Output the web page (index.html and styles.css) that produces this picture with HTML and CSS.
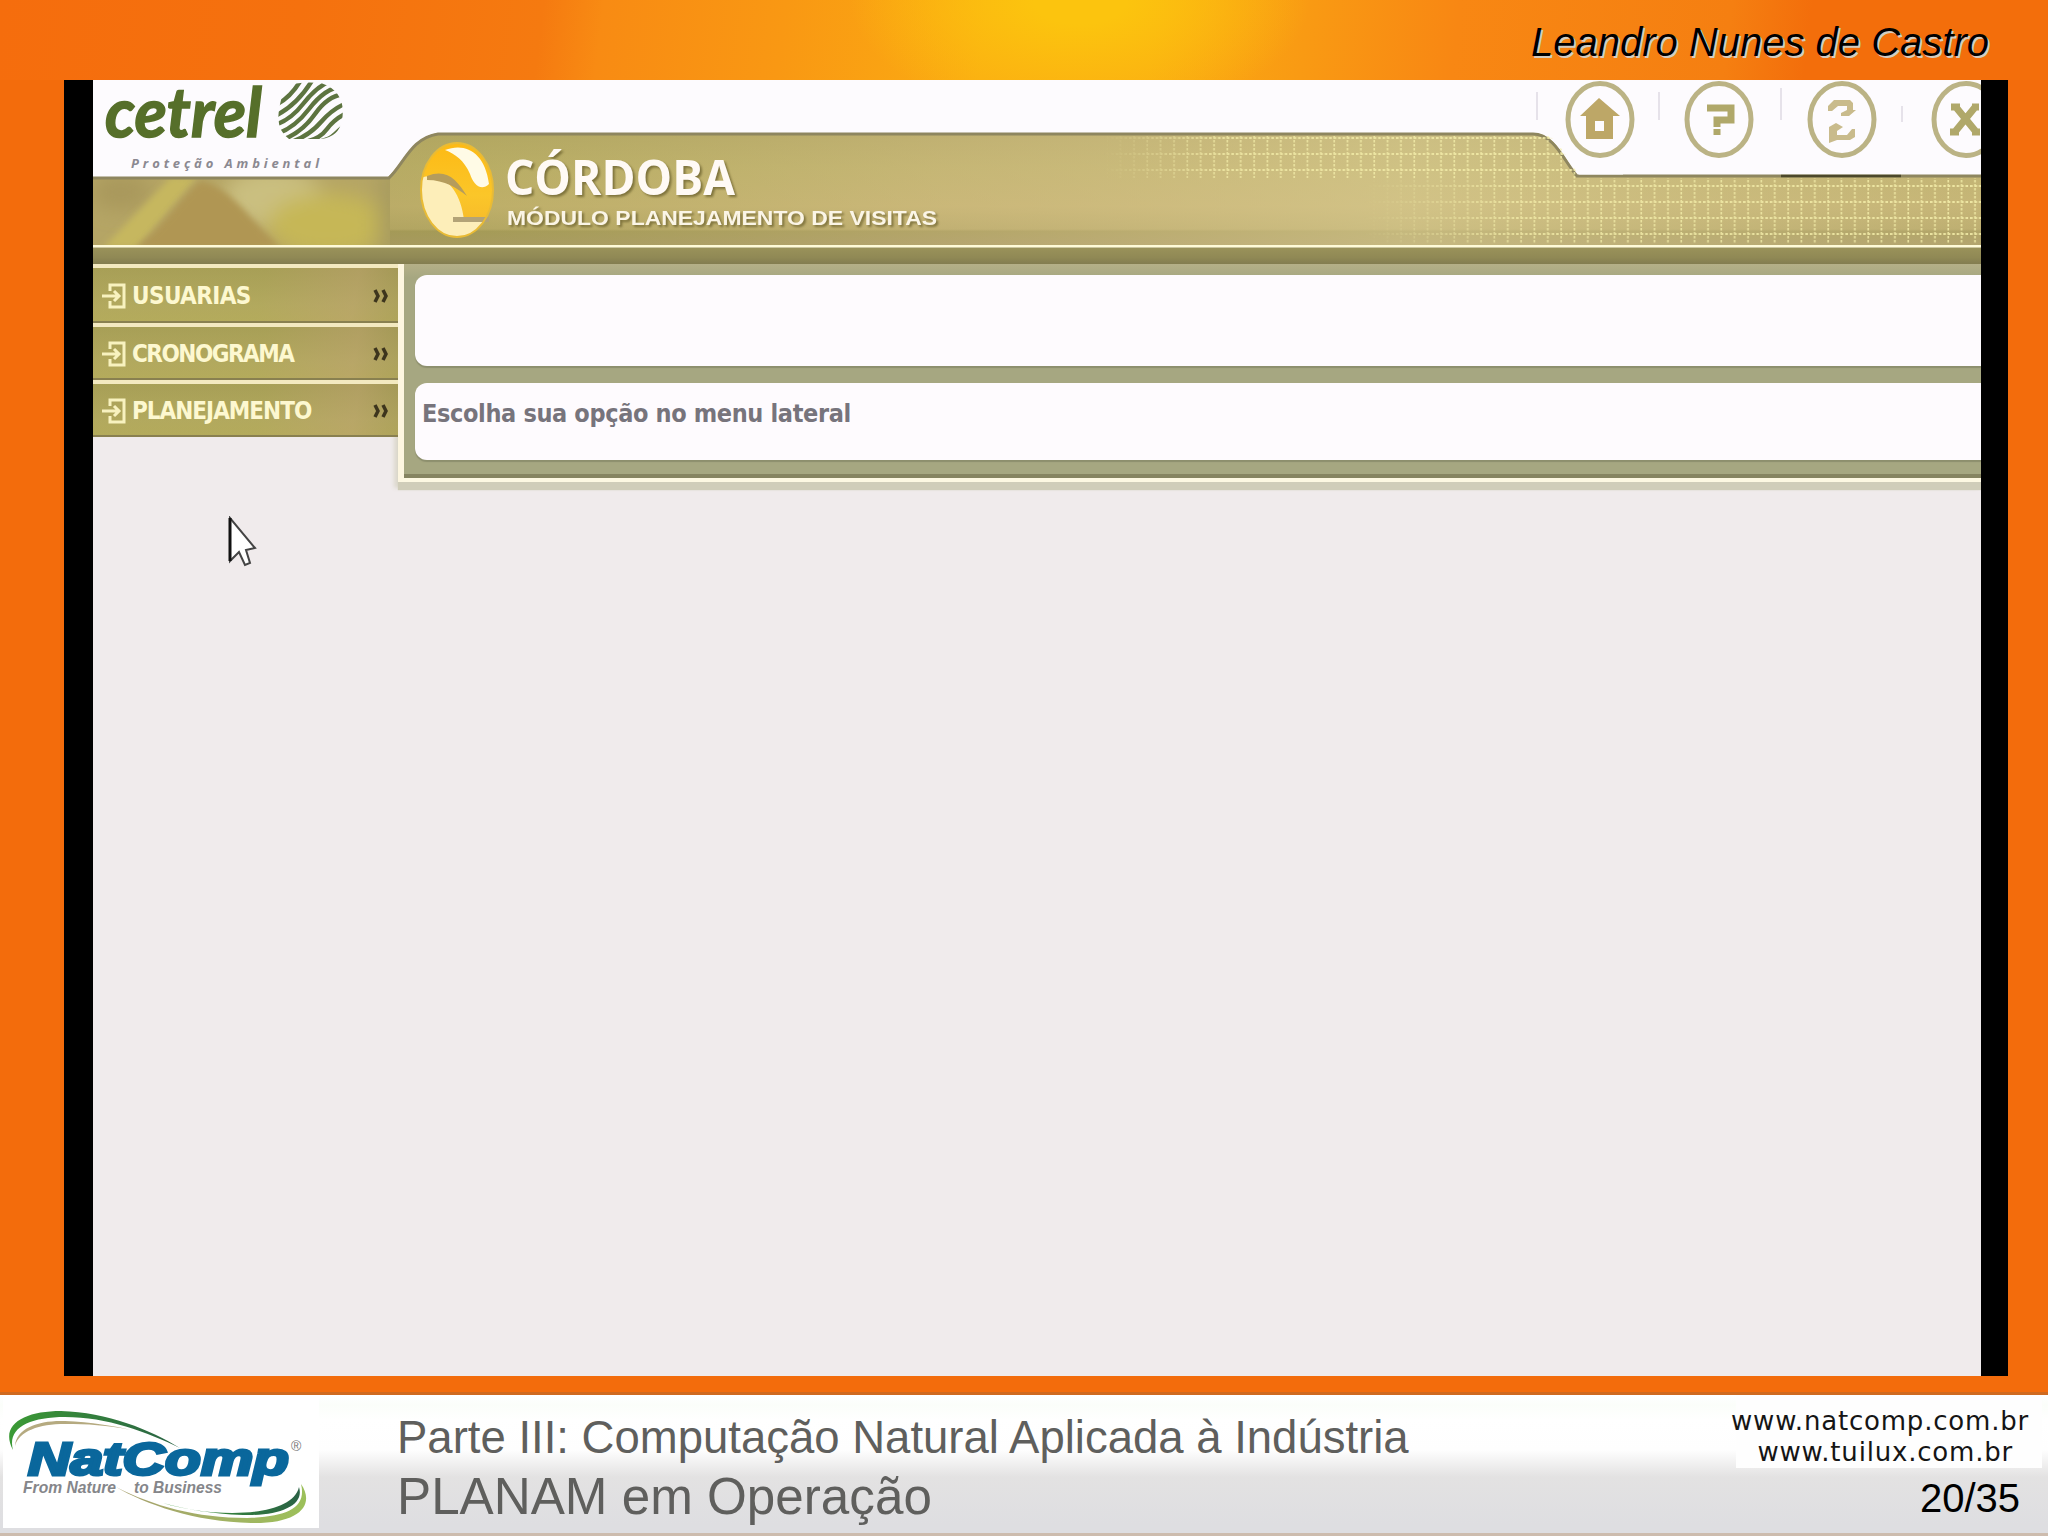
FILE: index.html
```html
<!DOCTYPE html>
<html lang="pt-br">
<head>
    <meta charset="UTF-8">
    <title>PLANAM em Operação</title>
    <link rel="stylesheet" href="styles.css">
</head>
<body>

<div class="slide">
    <div class="topbar">Leandro Nunes de Castro</div>

    <div class="stage">
        <div class="app">
            <div class="header">
                <!-- banner artwork -->
                <svg class="banner" width="1888" height="184" viewBox="0 0 1888 184">
                    <defs>
                        <linearGradient id="gold" x1="0" y1="0" x2="0" y2="1">
                            <stop offset="0" stop-color="#b3a866"/>
                            <stop offset=".3" stop-color="#bcb16b"/>
                            <stop offset=".65" stop-color="#c3b371"/>
                            <stop offset=".85" stop-color="#b5a868"/>
                            <stop offset=".87" stop-color="#a09758"/>
                            <stop offset="1" stop-color="#a39763"/>
                        </linearGradient>
                        <linearGradient id="shine" x1="0" y1="0" x2="1" y2="0">
                            <stop offset="0" stop-color="#a08a58" stop-opacity=".5"/>
                            <stop offset=".2" stop-color="#b0a455" stop-opacity=".3"/>
                            <stop offset=".45" stop-color="#d8c088" stop-opacity=".35"/>
                            <stop offset=".7" stop-color="#dacb92" stop-opacity=".65"/>
                            <stop offset="1" stop-color="#cbb980" stop-opacity=".4"/>
                        </linearGradient>
                        <linearGradient id="band" x1="0" y1="0" x2="0" y2="1">
                            <stop offset="0" stop-color="#9a925a"/>
                            <stop offset=".6" stop-color="#908955"/>
                            <stop offset="1" stop-color="#837d50"/>
                        </linearGradient>
                        <linearGradient id="fade" x1="0" y1="0" x2="1" y2="0">
                            <stop offset="0" stop-color="#fff" stop-opacity="0"/>
                            <stop offset=".25" stop-color="#fff" stop-opacity=".75"/>
                            <stop offset="1" stop-color="#fff" stop-opacity=".85"/>
                        </linearGradient>
                        <linearGradient id="orb" x1="0" y1="0" x2="0" y2="1">
                            <stop offset="0" stop-color="#fdb913"/>
                            <stop offset=".55" stop-color="#fbc629"/>
                            <stop offset="1" stop-color="#f4b52b"/>
                        </linearGradient>
                        <filter id="soft" x="-20%" y="-20%" width="140%" height="140%"><feGaussianBlur stdDeviation="10"/></filter>
                        <filter id="soft2"><feGaussianBlur stdDeviation="3"/></filter>
                        <pattern id="dots" x="8" y="0" width="13.35" height="16" patternUnits="userSpaceOnUse">
                            <path d="M5 0v16" stroke="#f4eeaa" stroke-width="1.6" stroke-dasharray="2.6 1.4"/>
                            <path d="M0 10h13.35" stroke="#f4eeaa" stroke-width="1.8" stroke-dasharray="2.6 1.85"/>
                        </pattern>
                        <mask id="m1"><rect x="1010" y="52" width="480" height="46" fill="url(#fade)"/></mask>
                        <mask id="m2"><rect x="1270" y="97" width="618" height="67" fill="url(#fade)"/></mask>
                        <clipPath id="photo"><rect x="0" y="99" width="297" height="66"/></clipPath>
                        <clipPath id="orbclip"><ellipse cx="364" cy="110" rx="36" ry="47"/></clipPath>
                        <clipPath id="leaf"><path d="M192 6Q207 1 228 3Q254 12 249 40Q246 57 228 59H196Q180 48 188 20Z"/></clipPath>
                        <path id="plate" d="M0 97H295C310 84 318 57 345 53H1440C1462 53 1472 80 1484 95H1888V166H0Z"/>
                    </defs>

                    <rect width="1888" height="184" fill="#fdfbfe"/>
                    <use href="#plate" fill="url(#gold)"/>
                    <use href="#plate" fill="url(#shine)"/>

                    <g clip-path="url(#photo)">
                        <rect y="97" width="320" height="70" fill="#b5a565"/>
                        <g filter="url(#soft)">
                            <ellipse cx="180" cy="118" rx="50" ry="30" fill="#cabf80"/>
                            <ellipse cx="235" cy="145" rx="60" ry="32" fill="#c6b757"/>
                            <ellipse cx="28" cy="112" rx="30" ry="18" fill="#a9985c"/>
                            <rect x="285" y="90" width="40" height="90" fill="#a99c5e"/>
                        </g>
                        <path d="M10 168L78 97H104L44 168Z" fill="#c6b75f" filter="url(#soft2)"/>
                        <path d="M42 168C70 148 88 116 108 101C138 108 152 134 188 168Z" fill="#b09653" filter="url(#soft2)"/>
                    </g>

                    <path d="M0 98H296C311 84 318 58 345 54H1440C1461 54 1471 81 1484 96H1888" fill="none" stroke="#8e865f" stroke-width="3"/>
                    <path d="M1688 96h120" stroke="#4c482b" stroke-width="2.5"/>

                    <rect x="1010" y="56" width="480" height="42" fill="url(#dots)" mask="url(#m1)"/>
                    <path d="M1448 52C1467 58 1475 82 1486 94.500H1530V52Z" fill="#fdfbfe"/>
                    <rect x="1270" y="98" width="618" height="66" fill="url(#dots)" mask="url(#m2)"/>
                    <path d="M1444 12v28M1566 12v28M1688 8v32M1809 26v16" stroke="#e6e2ea" stroke-width="2"/>

                    <rect y="165" width="1888" height="2.6" fill="#fffbd8"/>
                    <rect y="167.5" width="1888" height="16.5" fill="url(#band)"/>

                    <!-- cetrel logo -->
                    <text class="cetrel" x="12" y="57" textLength="157" lengthAdjust="spacingAndGlyphs">cetrel</text>
                    <text class="cetrel-sub" x="38" y="88" textLength="188">Proteção Ambiental</text>
                    <g clip-path="url(#leaf)" fill="none" stroke="#5d7440" stroke-width="4.4">
                        <path d="M180 26Q196 20 208 0"/>
                        <path d="M180 37Q204 26 220 -1"/>
                        <path d="M178 46Q196 42 210 24T238 1"/>
                        <path d="M180 55Q200 50 216 29T250 6"/>
                        <path d="M186 61Q208 54 222 34T254 14"/>
                        <path d="M198 62Q216 56 228 42T256 22"/>
                        <path d="M210 62Q226 60 234 49T256 32"/>
                        <path d="M224 62Q236 60 242 54T256 42"/>
                    </g>

                    <!-- yellow sphere -->
                    <g clip-path="url(#orbclip)">
                        <rect x="325" y="60" width="80" height="100" fill="url(#orb)"/>
                        <path d="M327 98C352 90 368 112 371 140L400 139C392 152 380 160 364 160C338 158 326 130 327 98Z" fill="#fdeeb9"/>
                        <path d="M352 70C372 62 392 72 396 104C388 112 380 104 377 94C371 80 362 74 352 70Z" fill="#fffbe6"/>
                        <path d="M334 96C354 88 364 100 374 116C364 108 352 100 334 100Z" fill="#b59c5c"/>
                    </g>
                    <path d="M360 139.500H396" stroke="#b3a377" stroke-width="5"/>
                    <ellipse cx="364" cy="110" rx="36" ry="47" fill="none" stroke="#e9bb35" stroke-width="2"/>

                    <text class="title shade" x="412" y="115" textLength="230" lengthAdjust="spacingAndGlyphs">CÓRDOBA</text>
                    <text class="subtitle shade" x="414" y="145" textLength="430" lengthAdjust="spacingAndGlyphs">MÓDULO PLANEJAMENTO DE VISITAS</text>
                </svg>

                <div class="toolbar">
                    <svg width="70" height="78" viewBox="0 0 70 78">
                        <ellipse cx="35" cy="39.500" rx="32" ry="36"/>
                        <path class="fill" d="M34 18L55 36H48V59H21V36H15ZM30 41V51H39V41Z" fill-rule="evenodd"/>
                    </svg>
                    <svg width="70" height="78" viewBox="0 0 70 78">
                        <ellipse cx="35" cy="39.500" rx="32" ry="36"/>
                        <path class="mark" d="M23 28H47V40H33V47M33 49V55"/>
                    </svg>
                    <svg width="70" height="78" viewBox="0 0 70 78">
                        <ellipse cx="35" cy="39.500" rx="32" ry="36"/>
                        <path class="fill pale" d="M21 31V26L27 20H43L46 23V30H49L42 36H34V33L40 30V26H31L25 31Z"/>
                        <path class="fill pale" d="M22 47L29 43L36 47L30 51V55H40L45 49H48V57L43 60H30L22 63Z"/>
                    </svg>
                    <svg width="70" height="78" viewBox="0 0 70 78">
                        <ellipse cx="35" cy="39.500" rx="32" ry="36"/>
                        <path class="mark" d="M24 26L46 53M45 26L23 53M20 27H29M41 27H48M19 52H28M41 52H49"/>
                    </svg>
                </div>
            </div>

            <div class="content">
                <div class="menu">
                    <div class="item first">
                        <svg width="24" height="26" viewBox="0 0 24 26"><path d="M8 8V2H22V24H8V18M0 13H16M12 8L17 13L12 18"/></svg>
                        <span class="usuarias">USUARIAS</span>
                        <svg class="arrows" width="16" height="14" viewBox="0 0 16 14"><path d="M2 1L5 7L2 13M10 1L13 7L10 13"/></svg>
                    </div>
                    <div class="item">
                        <svg width="24" height="26" viewBox="0 0 24 26"><path d="M8 8V2H22V24H8V18M0 13H16M12 8L17 13L12 18"/></svg>
                        <span class="cronograma">CRONOGRAMA</span>
                        <svg class="arrows" width="16" height="14" viewBox="0 0 16 14"><path d="M2 1L5 7L2 13M10 1L13 7L10 13"/></svg>
                    </div>
                    <div class="item">
                        <svg width="24" height="26" viewBox="0 0 24 26"><path d="M8 8V2H22V24H8V18M0 13H16M12 8L17 13L12 18"/></svg>
                        <span class="planejamento">PLANEJAMENTO</span>
                        <svg class="arrows" width="16" height="14" viewBox="0 0 16 14"><path d="M2 1L5 7L2 13M10 1L13 7L10 13"/></svg>
                    </div>
                </div>
                <div class="panel">
                    <div class="box empty"></div>
                    <div class="box">Escolha sua opção no menu lateral</div>
                </div>
            </div>

            <svg class="cursor" width="30" height="52" viewBox="0 0 30 52">
                <path d="M2 2V45L11 36L17 49L22 47L18 34L27 32Z" fill="#fff" stroke="#444" stroke-width="2"/>
                <path d="M2 2V45" stroke="#111" stroke-width="3"/>
            </svg>
        </div>
    </div>

    <div class="footer">
        <svg class="logo" width="316" height="132" viewBox="0 0 316 132">
            <defs>
                <linearGradient id="g1" x1="0" y1="0" x2="1" y2="0">
                    <stop offset="0" stop-color="#3b9a35"/>
                    <stop offset="1" stop-color="#2a6245"/>
                </linearGradient>
                <linearGradient id="g2" x1="0" y1="0" x2="1" y2="0">
                    <stop offset="0" stop-color="#a8a070"/>
                    <stop offset="1" stop-color="#9cc05a"/>
                </linearGradient>
            </defs>
            <path d="M10 54C-4 28 22 15 58 15C104 16 148 34 177 52C144 36 104 21 62 21C26 21 4 32 10 54Z" fill="url(#g1)"/>
            <path d="M12 50C13 32 36 24 62 25C88 26 112 30 128 34C104 29 84 28 62 28C36 28 16 35 12 50Z" fill="#b5aa80"/>
            <text class="natcomp" x="25" y="79" textLength="261" lengthAdjust="spacingAndGlyphs">NatComp</text>
            <text class="reg" x="288" y="55">®</text>
            <text class="tag" x="20" y="97" textLength="93" lengthAdjust="spacingAndGlyphs">From Nature</text>
            <text class="tag" x="131" y="97" textLength="88" lengthAdjust="spacingAndGlyphs">to Business</text>
            <path d="M160 107C204 121 288 124 296 91C302 110 276 120 240 119C208 118 182 113 160 107Z" fill="url(#g1)"/>
            <path d="M113 91C150 110 194 122 244 122C284 121 304 112 298 88C312 108 298 128 248 127C192 126 142 108 113 91Z" fill="url(#g2)"/>
        </svg>
        <div class="titles">
            <div class="part">Parte III: Computação Natural Aplicada à Indústria</div>
            <div class="topic">PLANAM em Operação</div>
        </div>
        <div class="links">
            <div class="sites">
                <div class="site1">www.natcomp.com.br</div>
                <div class="site2">www.tuilux.com.br</div>
            </div>
            <div class="page">20/35</div>
        </div>
    </div>
</div>

</body>
</html>
```
FILE: styles.css
```css
body {
    margin: 0;
    font-family: "Liberation Sans", Arial, sans-serif;
}

.slide {
    width: 2048px;
    height: 1536px;
    overflow: hidden;
    display: flex;
    flex-direction: column;
    background: #f36c0c;
}

.topbar {
    height: 80px;
    box-sizing: border-box;
    padding: 19px 59px 0 0;
    text-align: right;
    font-size: 40px;
    line-height: 46px;
    font-style: italic;
    color: #000;
    text-shadow: 2px 2px 0 #d5cdc0;
    background:
        radial-gradient(ellipse 230px 120px at 1080px 0, #fcc40e 20%, rgba(252, 190, 15, 0)),
        linear-gradient(97deg, #f56d0d 0, #f5710e 300px, #f57a10 540px, #f88b13 600px, #f99813 780px, #fbac12 980px, #fbac12 1150px, #f99a13 1300px, #f88713 1450px, #f57f11 1720px, #f36e0b 1800px);
}

.stage {
    height: 1296px;
    box-sizing: border-box;
    margin: 0 40px 0 64px;
    padding: 0 27px 0 29px;
    background: #000;
}

.app {
    height: 100%;
    position: relative;
    overflow: hidden;
    background: #f0ebec;
}

/* header */
.header {
    height: 184px;
    position: relative;
}

.banner {
    position: absolute;
    top: 0;
    left: 0;
}

.cetrel {
    font: italic bold 68px Lato, sans-serif;
    fill: #566f2a;
    stroke: #566f2a;
    stroke-width: 1.5;
}

.cetrel-sub {
    font: italic bold 13px "Open Sans", sans-serif;
    fill: #8b8991;
}

.title {
    font: bold 49px "Open Sans", sans-serif;
    fill: #fffaf5;
}

.subtitle {
    font: bold 20px "Liberation Sans", sans-serif;
    fill: #fbf5e6;
}

.shade {
    filter: drop-shadow(2px 2px 1px rgba(100, 90, 40, .7));
}

.toolbar {
    position: relative;
    display: grid;
    grid-template-columns: 119px 123px 124px 70px;
    padding-left: 1472px;
}

.toolbar svg {
    fill: none;
    stroke: #bbb385;
    stroke-width: 5;
}

.toolbar .fill {
    fill: #bda767;
    stroke: none;
}

.toolbar .pale {
    fill: #c9bb8c;
}

.toolbar .mark {
    stroke: #b0a86a;
    stroke-width: 7;
}

/* menu and panel */
.content {
    display: flex;
    align-items: flex-start;
}

.menu {
    width: 305px;
    position: relative;
    z-index: 1;
}

.item {
    height: 57px;
    box-sizing: border-box;
    display: flex;
    align-items: center;
    padding: 2px 9px 0 9px;
    border-top: 4px solid #f3e9c0;
    border-bottom: 2px solid #898050;
    background: linear-gradient(100deg, rgba(178, 172, 80, .35) 55%, rgba(190, 165, 105, .5) 85%, rgba(160, 150, 70, .3)), linear-gradient(#a2985a, #b2a765 70%, #b5aa62);
    color: #fdf8d0;
    font: bold 24px "DejaVu Sans Condensed", "DejaVu Sans", sans-serif;
    white-space: nowrap;
}

.first {
    height: 59px;
}

.item svg {
    flex: none;
    fill: none;
    stroke: #f8f2bf;
    stroke-width: 3;
}

.item span {
    flex: 1;
    padding-left: 6px;
}

.item .arrows {
    stroke: #3d351d;
    stroke-width: 3.5;
}

.usuarias {
    letter-spacing: -0.6px;
}

.cronograma {
    letter-spacing: -1.5px;
}

.planejamento {
    letter-spacing: -1px;
}

.panel {
    flex: 1;
    box-sizing: border-box;
    height: 218px;
    padding: 11px 0 0 11px;
    border-left: 6px solid #fdf6e0;
    border-bottom: 4px solid #fdf8e2;
    background: linear-gradient(#b5b088, #a6a781 14px, #a6a781 210px, #868461 210px);
    box-shadow: 0 8px 1px #d0cdb9, -4px 6px 4px #dcd8cc;
}

.box {
    height: 77px;
    box-sizing: border-box;
    padding: 14px 7px;
    border-radius: 12px 0 0 12px;
    background: #fefbfe;
    box-shadow: 0 2px 1px #8d8f6d;
    color: #77747c;
    font: bold 25px/34px "DejaVu Sans Condensed", "DejaVu Sans", sans-serif;
    letter-spacing: -0.36px;
}

.empty {
    height: 91px;
    margin-bottom: 17px;
}

.cursor {
    position: absolute;
    left: 135px;
    top: 436px;
}

/* footer */
.footer {
    flex: 1;
    box-sizing: border-box;
    margin-top: 16px;
    display: flex;
    align-items: flex-start;
    border-top: 3px solid #cf6a20;
    border-bottom: 3px solid #cdbcae;
    background: linear-gradient(#fff, #fbfefa 10px, #fff 25px, #fefefe 55px, #e3e2e2 82px, #dedee1 130px);
}

.logo {
    flex: none;
    margin: 1px 0 0 3px;
    background: #fff;
}

.natcomp {
    font: italic bold 46px "Liberation Sans", sans-serif;
    fill: #0a679c;
    stroke: #0a679c;
    stroke-width: 3;
}

.reg {
    font-size: 14px;
    fill: #777;
}

.tag {
    font-size: 16.5px;
    font-style: italic;
    font-weight: bold;
    fill: #85868a;
}

.titles {
    flex: 1;
    padding: 17px 0 0 78px;
    color: #5f5f5d;
}

.part {
    font-size: 45.5px;
    line-height: 52px;
}

.topic {
    font-size: 51.2px;
    line-height: 58px;
    margin-top: 4px;
}

.links {
    width: 330px;
    display: flex;
    flex-direction: column;
    align-items: flex-end;
    color: #151515;
}

.sites {
    width: 306px;
    box-sizing: border-box;
    padding: 11px 13px 0 0;
    margin-right: 6px;
    font: 26px/31px "DejaVu Sans", sans-serif;
    letter-spacing: 0.8px;
    background: #fefefe;
    display: flex;
    flex-direction: column;
    align-items: flex-end;
}

.site2 {
    padding-right: 16px;
}

.page {
    padding: 7px 28px 0 0;
    font-size: 40px;
    line-height: 46px;
    color: #000;
}
```
